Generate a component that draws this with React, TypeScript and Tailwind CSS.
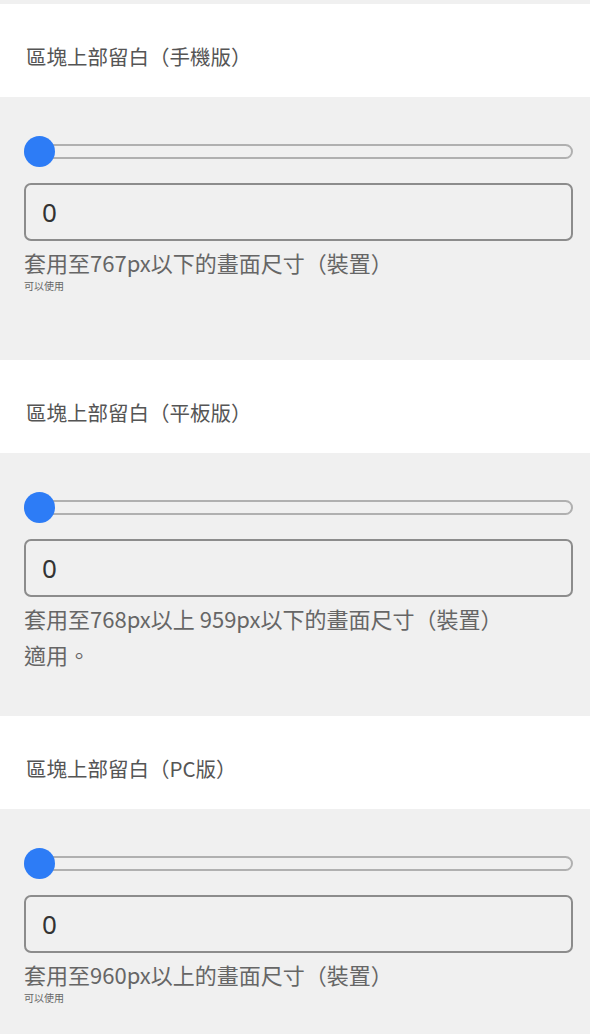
import React from "react";

const font = { fontFamily: '"Noto Sans CJK TC", "Noto Sans", sans-serif' };

function Section({ title, hint, extra, small }: { title: string; hint: string; extra?: string; small?: boolean }) {
  return (
    <div>
      <div className="bg-white h-[93px] pl-[26px] pr-[17px] pt-[38px]">
        <div className="text-[20.5px] leading-[28px] text-[#555]">{title}</div>
      </div>
      <div className="bg-[#f0f0f0] h-[263px] pl-[24px] pr-[17px] pt-[39px]">
        <div className="relative h-[31px] flex items-center">
          <div className="w-full h-[15px] rounded-full border-2 border-[#b0b0b0] bg-[#f0f0f0]" />
          <div className="absolute left-0 top-0 w-[31px] h-[31px] rounded-full bg-[#2d7cf6]" />
        </div>
        <div className="mt-[16px] h-[58px] border-2 border-[#8c8c8c] rounded-[7px] flex items-center px-[16px]">
          <span className="text-[26px] text-[#333]" style={{ fontFamily: '"Noto Sans", sans-serif' }}>0</span>
        </div>
        <div className="mt-[3px] text-[22px] leading-[36px] text-[#666]">
          {hint}
          {extra && (
            <>
              <br />
              {extra}
            </>
          )}
        </div>
        {small && <div className="text-[10px] leading-[10px] text-[#666] mt-[1px]">可以使用</div>}
      </div>
    </div>
  );
}

export default function App() {
  return (
    <div className="w-[590px] h-[1034px] overflow-hidden bg-[#f0f0f0]" style={font}>
      <div className="h-[4px] bg-[#f0f0f0]" />
      <Section title="區塊上部留白（手機版）" hint="套用至767px以下的畫面尺寸（裝置）" small />
      <Section title="區塊上部留白（平板版）" hint="套用至768px以上 959px以下的畫面尺寸（裝置）" extra="適用。" />
      <Section title="區塊上部留白（PC版）" hint="套用至960px以上的畫面尺寸（裝置）" small />
    </div>
  );
}
